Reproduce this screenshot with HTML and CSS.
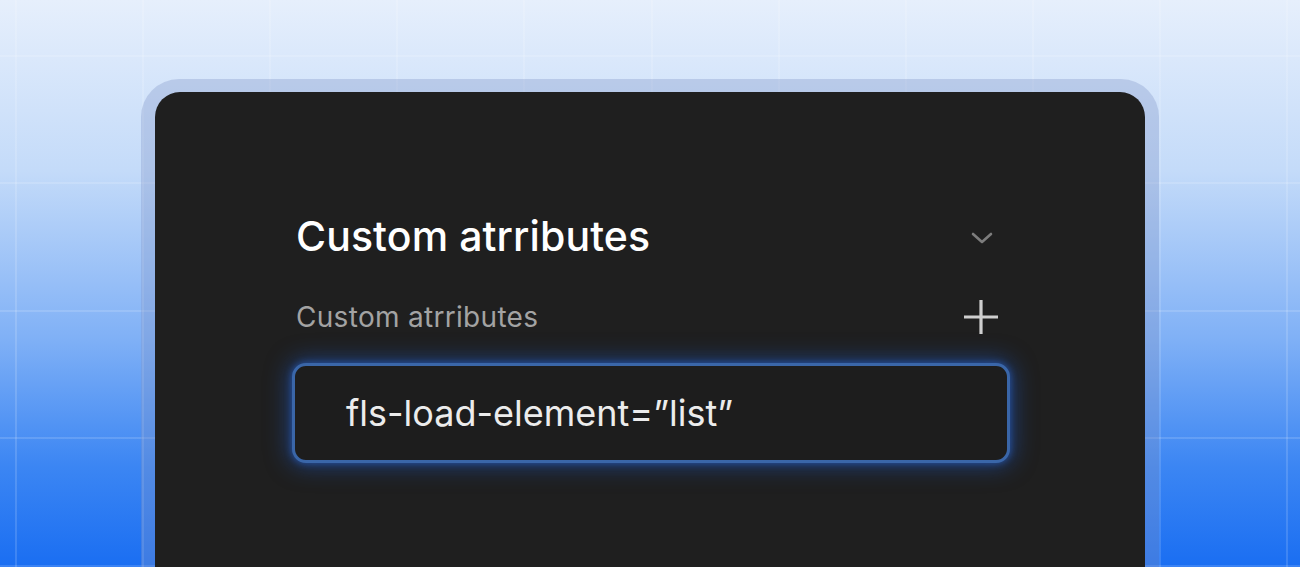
FILE: index.html
```html
<!DOCTYPE html>
<html>
<head>
<meta charset="utf-8">
<link rel="stylesheet" href="styles.css">
</head>
<body>
<div class="stage">
  <div class="frame">
    <div class="panel">
      <div class="content">
        <div class="row head">
          <h1 class="title">Custom atrributes</h1>
          <svg class="chev" width="22" height="14" viewBox="0 0 22 14"><path d="M2 3 L11 11 L20 3" fill="none" stroke="#7d7d7d" stroke-width="2.6" stroke-linecap="round" stroke-linejoin="round"/></svg>
        </div>
        <div class="row sub">
          <span class="label">Custom atrributes</span>
          <svg class="plus" width="38" height="38" viewBox="0 0 38 38"><path d="M19 2 V36 M2 19 H36" fill="none" stroke="#cfcfcf" stroke-width="3.2"/></svg>
        </div>
        <div class="field">fls-load-element=”list”</div>
      </div>
    </div>
  </div>
</div>
</body>
</html>
```
FILE: styles.css
```css
html, body {
  margin: 0;
  padding: 0;
}
body {
  width: 1300px;
  height: 567px;
  overflow: hidden;
  font-family: Inter, "Noto Sans", sans-serif;
  background:
    repeating-linear-gradient(90deg, transparent 0 15px, rgba(255,255,255,0.14) 15px 17px, transparent 17px 127.1px),
    repeating-linear-gradient(180deg, transparent 0 55px, rgba(255,255,255,0.14) 55px 57px, transparent 57px 127.5px),
    linear-gradient(180deg, #e6effc 0%, #c4dbf9 30%, #7fb0f6 60%, #3c86f3 82%, #1a6ef2 100%);
}
.stage {
  padding-top: 79px;
  display: flex;
  justify-content: center;
}
.frame {
  width: 990px;
  padding: 13px 14px 0;
  border-radius: 38px 38px 0 0;
  background: rgba(128, 150, 200, 0.34);
  height: 475px;
}
.panel {
  background: #1f1f1f;
  border-radius: 25px 25px 0 0;
  height: 100%;
  padding: 120px 135px 0 137px;
  box-sizing: border-box;
}
.row {
  display: flex;
  justify-content: space-between;
  align-items: center;
}
.title {
  margin: 0 0 0 4px;
  font-size: 41px;
  line-height: 48px;
  font-weight: 500;
  color: #ffffff;
  letter-spacing: 0.1px;
}
.chev {
  margin-right: 17px;
  margin-top: 3px;
}
.sub {
  margin-top: 38px;
}
.label {
  margin-left: 4px;
  font-size: 28px;
  line-height: 32px;
  color: #a3a3a3;
  letter-spacing: 0.3px;
}
.plus {
  margin-right: 10px;
}
.field {
  margin-top: 27px;
  height: 100px;
  box-sizing: border-box;
  border: 3px solid #3a66a8;
  border-radius: 14px;
  background: #1d1d1d;
  box-shadow: 0 0 22px 4px rgba(30, 90, 200, 0.5), 0 0 6px 1px rgba(50, 110, 220, 0.5);
  display: flex;
  align-items: center;
  padding-left: 51px;
  font-size: 36px;
  color: #ececec;
}
```
